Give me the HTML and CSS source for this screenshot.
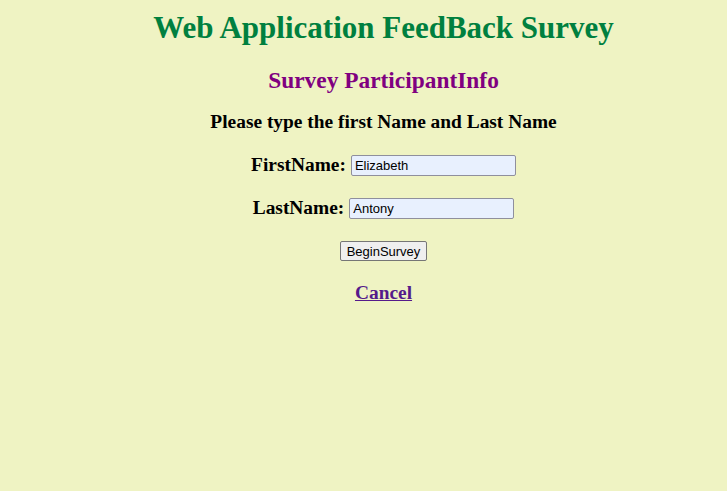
FILE: index.html
```html
<!DOCTYPE html>
<html>
<head>
<meta charset="utf-8">
<link rel="stylesheet" href="styles.css">
</head>
<body>
<div class="page">
  <h1 class="title">Web Application FeedBack Survey</h1>
  <h2 class="subtitle">Survey ParticipantInfo</h2>
  <h3 class="prompt">Please type the first Name and Last Name</h3>
  <form class="form">
    <div class="row">
      <label class="label">FirstName:</label>
      <input class="field" type="text" value="Elizabeth">
    </div>
    <div class="row">
      <label class="label">LastName:</label>
      <input class="field" type="text" value="Antony">
    </div>
    <div class="row">
      <button type="button" class="btn">BeginSurvey</button>
    </div>
    <div class="row row-link">
      <a class="cancel" href="#">Cancel</a>
    </div>
  </form>
</div>
</body>
</html>
```
FILE: styles.css
```css
html, body {
  margin: 0;
  background: #eff3c3;
}
body {
  font-family: "Liberation Serif", "Times New Roman", serif;
  height: 491px;
}
.page {
  padding: 8px 8px 0 48px;
  text-align: center;
}
.title {
  margin: 0;
  font-size: 31px;
  line-height: 40px;
  color: #00803f;
}
.subtitle {
  margin: 18px 0 0;
  font-size: 23.4px;
  line-height: 28px;
  color: #800080;
}
.prompt {
  margin: 16px 0 0;
  font-size: 19.4px;
  line-height: 24px;
  color: #000;
}
.form {
  margin: 0;
}
.row {
  margin-top: 21px;
  height: 22px;
  display: flex;
  justify-content: center;
  align-items: center;
  gap: 5px;
}
.row:first-child {
  margin-top: 20px;
}
.row-link {
  margin-top: 20px;
}
.label {
  font-weight: bold;
  font-size: 19.4px;
}
.field {
  width: 165px;
  height: 21px;
  box-sizing: border-box;
  padding: 1px 3px;
  font-family: "Liberation Sans", Arial, sans-serif;
  font-size: 13px;
  color: #000;
  background: #e8f0fe;
  border: 1px solid #8f8f9d;
  border-radius: 2px;
}
.btn {
  font-family: "Liberation Sans", Arial, sans-serif;
  font-size: 13px;
  height: 20px;
  padding: 0 6px;
  background: #efefef;
  border: 1px solid #767676;
  border-radius: 2px;
  color: #000;
}
.cancel {
  font-weight: bold;
  font-size: 19.4px;
  color: #551a8b;
}
```
